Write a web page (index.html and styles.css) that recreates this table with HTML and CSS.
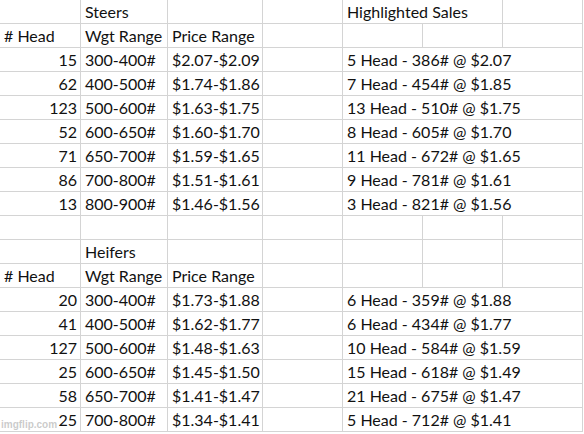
FILE: index.html
```html
<!DOCTYPE html>
<html>
<head>
<meta charset="utf-8">
<link rel="stylesheet" href="styles.css">
</head>
<body>
<div class="sheet">
  <div class="c"></div><div class="c">Steers</div><div class="c"></div><div class="c"></div><div class="c span2">Highlighted Sales</div><div class="c"></div>
  <div class="c"># Head</div><div class="c">Wgt Range</div><div class="c">Price Range</div><div class="c"></div><div class="c"></div><div class="c"></div><div class="c"></div>
  <div class="c num">15</div><div class="c">300-400#</div><div class="c">$2.07-$2.09</div><div class="c"></div><div class="c span3">5 Head - 386# @ $2.07</div>
  <div class="c num">62</div><div class="c">400-500#</div><div class="c">$1.74-$1.86</div><div class="c"></div><div class="c span3">7 Head - 454# @ $1.85</div>
  <div class="c num">123</div><div class="c">500-600#</div><div class="c">$1.63-$1.75</div><div class="c"></div><div class="c span3">13 Head - 510# @ $1.75</div>
  <div class="c num">52</div><div class="c">600-650#</div><div class="c">$1.60-$1.70</div><div class="c"></div><div class="c span3">8 Head - 605# @ $1.70</div>
  <div class="c num">71</div><div class="c">650-700#</div><div class="c">$1.59-$1.65</div><div class="c"></div><div class="c span3">11 Head - 672# @ $1.65</div>
  <div class="c num">86</div><div class="c">700-800#</div><div class="c">$1.51-$1.61</div><div class="c"></div><div class="c span3">9 Head - 781# @ $1.61</div>
  <div class="c num">13</div><div class="c">800-900#</div><div class="c">$1.46-$1.56</div><div class="c"></div><div class="c span3">3 Head - 821# @ $1.56</div>
  <div class="c"></div><div class="c"></div><div class="c"></div><div class="c"></div><div class="c"></div><div class="c"></div><div class="c"></div>
  <div class="c"></div><div class="c">Heifers</div><div class="c"></div><div class="c"></div><div class="c"></div><div class="c"></div><div class="c"></div>
  <div class="c"># Head</div><div class="c">Wgt Range</div><div class="c">Price Range</div><div class="c"></div><div class="c"></div><div class="c"></div><div class="c"></div>
  <div class="c num">20</div><div class="c">300-400#</div><div class="c">$1.73-$1.88</div><div class="c"></div><div class="c span3">6 Head - 359# @ $1.88</div>
  <div class="c num">41</div><div class="c">400-500#</div><div class="c">$1.62-$1.77</div><div class="c"></div><div class="c span3">6 Head - 434# @ $1.77</div>
  <div class="c num">127</div><div class="c">500-600#</div><div class="c">$1.48-$1.63</div><div class="c"></div><div class="c span3">10 Head - 584# @ $1.59</div>
  <div class="c num">25</div><div class="c">600-650#</div><div class="c">$1.45-$1.50</div><div class="c"></div><div class="c span3">15 Head - 618# @ $1.49</div>
  <div class="c num">58</div><div class="c">650-700#</div><div class="c">$1.41-$1.47</div><div class="c"></div><div class="c span3">21 Head - 675# @ $1.47</div>
  <div class="c num">25</div><div class="c">700-800#</div><div class="c">$1.34-$1.41</div><div class="c"></div><div class="c span3">5 Head - 712# @ $1.41</div>
</div>
<div class="watermark">imgflip.com</div>
</body>
</html>
```
FILE: styles.css
```css
html, body {
  margin: 0;
  padding: 0;
  background: #fff;
}
body {
  width: 584px;
  height: 434px;
  overflow: hidden;
  position: relative;
}
.sheet {
  display: grid;
  grid-template-columns: 81px 87px 95px 80px 80px 80px 80px;
  grid-auto-rows: 24px;
  font-family: Lato, "Open Sans", sans-serif;
  font-size: 16px;
  color: #111;
}
.c {
  box-sizing: border-box;
  border-right: 1px solid #d4d4d4;
  border-bottom: 1px solid #d4d4d4;
  padding: 0 3px 0 4px;
  line-height: 23px;
  white-space: nowrap;
  overflow: hidden;
}
.num {
  text-align: right;
}
.span2 {
  grid-column: span 2;
}
.span3 {
  grid-column: span 3;
}
.watermark {
  position: absolute;
  left: 1px;
  top: 419px;
  font-family: "Liberation Sans", Arial, sans-serif;
  font-size: 10px;
  font-weight: bold;
  color: rgba(150, 150, 150, 0.5);
  text-shadow: 0 0 1px rgba(255, 255, 255, 0.6);
}
```
